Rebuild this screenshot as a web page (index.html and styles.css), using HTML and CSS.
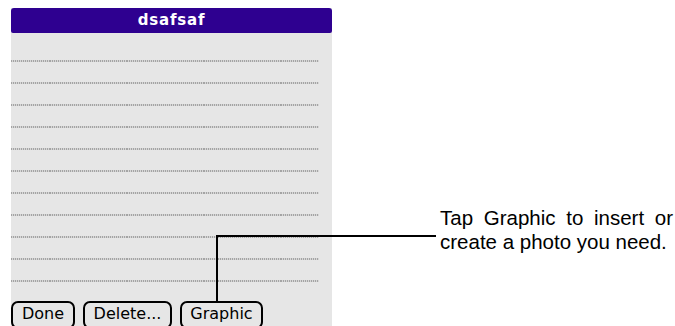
FILE: index.html
```html
<!DOCTYPE html>
<html>
<head>
    <meta charset="utf-8">
    <title>Memo</title>
    <link rel="stylesheet" href="styles.css">
</head>
<body>
<div id="page">
    <div id="memo">
        <div class="title">dsafsaf</div>
        <div class="lines">
            <div class="line"></div>
            <div class="line"></div>
            <div class="line"></div>
            <div class="line"></div>
            <div class="line"></div>
            <div class="line"></div>
            <div class="line"></div>
            <div class="line"></div>
            <div class="line"></div>
            <div class="line"></div>
            <div class="line"></div>
        </div>
        <div class="buttons">
            <span class="btn btn-done">Done</span>
            <span class="btn btn-delete">Delete...</span>
            <span class="btn btn-graphic">Graphic</span>
        </div>
    </div>
    <div class="callout">
        <p>Tap Graphic to insert or create a photo you need.</p>
    </div>
    <div class="leader"></div>
</div>
</body>
</html>
```

FILE: styles.css
```css
body {
    margin: 0;
    padding: 0;
    background-color: #fff;
    font-family: "Liberation Sans", Arial, sans-serif;
}

#page {
    position: relative;
    display: flex;
    width: 675px;
    height: 326px;
    overflow: hidden;
}

#memo {
    width: 321px;
    height: 318px;
    margin: 8px 0 0 11px;
    background-color: #e6e6e6;
    overflow: hidden;
}

.title {
    height: 25px;
    background-color: #2e0090;
    border-radius: 3px 3px 2px 2px;
    color: #fff;
    font-family: "DejaVu Sans", sans-serif;
    font-weight: bold;
    font-size: 15px;
    letter-spacing: 0.8px;
    line-height: 25px;
    text-align: center;
}

.lines {
    padding-top: 7px;
}

.line {
    width: 308px;
    height: 20px;
    border-bottom: 2px solid transparent;
    border-image: repeating-linear-gradient(90deg, #a4a4a4 0 1px, #d6d6d6 1px 2px) 2;
}

.buttons {
    display: flex;
    gap: 8px;
    margin-top: 19px;
}

.btn {
    box-sizing: border-box;
    height: 28px;
    border: 2px solid #000;
    border-radius: 7px;
    font-family: "DejaVu Sans", sans-serif;
    font-size: 16px;
    line-height: 21px;
    text-align: center;
    color: #000;
}

.btn-done {
    width: 64px;
}

.btn-delete {
    width: 89px;
}

.btn-graphic {
    width: 83px;
}

.callout {
    width: 233px;
    margin-left: 108px;
    padding-top: 206px;
}

.callout p {
    margin: 0;
    font-size: 20.5px;
    line-height: 24px;
    text-align: justify;
    color: #000;
}

.leader {
    position: absolute;
    left: 216px;
    top: 235px;
    width: 218px;
    height: 64px;
    border-top: 2px solid #000;
    border-left: 2px solid #000;
}
```
